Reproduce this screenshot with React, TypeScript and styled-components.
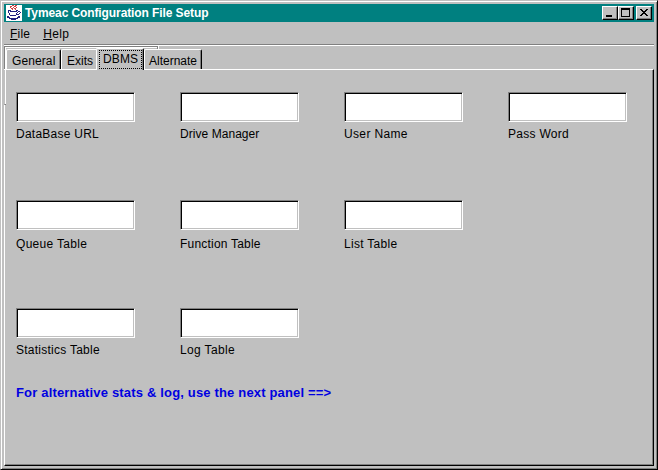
import React from "react";
import styled, { createGlobalStyle, css } from "styled-components";

const Global = createGlobalStyle`
  *, *::before { box-sizing: border-box; }
  body { margin: 0; background: #c0c0c0; overflow: hidden; }
`;

const Window = styled.div`
  width: 658px;
  height: 470px;
  background: #c0c0c0;
  border: 1px solid;
  border-color: #c0c0c0 #000 #000 #c0c0c0;
  box-shadow: inset 1px 1px #fff, inset -1px -1px #808080;
  padding: 3px;
  display: flex;
  flex-direction: column;
  font: 12px/14px "Liberation Sans", Arial, sans-serif;
  color: #000;
  cursor: default;
`;

const TitleBar = styled.header`
  height: 18px;
  width: 650px;
  flex: none;
  background: #008080;
  display: flex;
  align-items: center;
  padding: 0 2px;
`;

const Icon = styled.svg`
  display: block;
  width: 16px;
  height: 16px;
  margin-right: 3px;
`;

const Title = styled.h1`
  margin: 0;
  flex: 1;
  color: #fff;
  font: bold 12px/16px "Liberation Sans", Arial, sans-serif;
  letter-spacing: -0.1px;
  white-space: nowrap;
`;

const Control = styled.button<{ $gap?: boolean }>`
  width: 16px;
  height: 14px;
  padding: 0;
  margin-left: ${(p) => (p.$gap ? 2 : 0)}px;
  background: #c0c0c0;
  border: 1px solid;
  border-color: #fff #000 #000 #fff;
  box-shadow: inset -1px -1px #808080;
  svg { display: block; }
`;

const MenuBar = styled.nav`
  height: 22px;
  flex: none;
  display: flex;
  gap: 13px;
  padding: 5px 6px 0;
`;

const Text = styled.span<{ $spacing?: number }>`
  letter-spacing: ${(p) => p.$spacing ?? 0}px;
  white-space: nowrap;
`;

const Content = styled.main`
  flex: 1;
  width: 650px;
  display: flex;
  flex-direction: column;
  border-top: 1px solid #808080;
  box-shadow: inset 0 1px #fff, inset 1px 0 #808080, inset 2px 0 #fff;
`;

const TabStrip = styled.div`
  height: 24px;
  flex: none;
  display: flex;
  align-items: flex-end;
  padding-left: 1px;
  margin-left: 1px;
  background:
    linear-gradient(#808080, #808080) 0 1px / 153px 1px no-repeat,
    linear-gradient(#fff, #fff) 0 2px / 152px 1px no-repeat,
    linear-gradient(#808080, #808080) 152px 1px / 1px 23px no-repeat,
    linear-gradient(#fff, #fff) 153px 1px / 1px 23px no-repeat;
`;

const Tab = styled.div<{ $width: number; $pad?: number; $active?: boolean; $covered?: boolean }>`
  width: ${(p) => p.$width}px;
  height: 20px;
  background: #c0c0c0;
  border: 1px solid;
  border-color: #fff #000 transparent #fff;
  border-bottom: 0;
  border-radius: 2px 2px 0 0;
  box-shadow: inset -1px 0 #808080;
  padding: 4px 0 0 ${(p) => p.$pad ?? 5}px;
  ${(p) =>
    p.$covered &&
    css`
      border-right: 0;
      border-top-right-radius: 0;
      box-shadow: none;
    `}
  ${(p) =>
    p.$active &&
    css`
      position: relative;
      z-index: 1;
      height: 22px;
      margin-bottom: -1px;
      padding: 1px 2px;
    `}
`;

const Focus = styled.div`
  width: 43px;
  height: 19px;
  border: 1px dotted #000;
  padding: 1px 0 0 3px;
`;

const Panel = styled.section`
  position: relative;
  flex: 1;
  width: 650px;
  border: 1px solid;
  border-color: #fff #000 #000 #fff;
  box-shadow: inset -1px -1px #808080;
  background: #c0c0c0;
  background-clip: padding-box;
  padding: 22px 0 0 11px;

  /* end of the etched frame that runs down behind the tab strip */
  &::before {
    content: "";
    position: absolute;
    left: -1px;
    top: 0;
    width: 2px;
    height: 35px;
    background: #fff;
    border-left: 1px solid #c0c0c0;
    border-bottom: 1px solid #808080;
  }
`;

const Fields = styled.div`
  display: grid;
  grid-template-columns: repeat(4, 164px);
  grid-auto-rows: 108px;
`;

const Field = styled.label<{ $gap: number }>`
  display: flex;
  flex-direction: column;
  align-items: flex-start;
  gap: ${(p) => p.$gap}px;
`;

const Input = styled.input`
  width: 119px;
  height: 30px;
  padding: 0 3px;
  outline: 0;
  border: 1px solid;
  border-color: #808080 #fff #fff #808080;
  border-radius: 0;
  background: #fff;
  box-shadow: inset 1px 1px #000, inset -1px -1px #c0c0c0;
`;

const Note = styled.p`
  margin: -31px 0 0;
  color: #0000e0;
  font: bold 13px/16px "Liberation Sans", Arial, sans-serif;
  letter-spacing: 0.17px;
  white-space: nowrap;
`;

type FieldSpec = { name: string; spacing: number; gap: number };

const fields: (FieldSpec | null)[] = [
  { name: "DataBase URL", spacing: 0.25, gap: 5 },
  { name: "Drive Manager", spacing: 0.05, gap: 5 },
  { name: "User Name", spacing: 0.35, gap: 5 },
  { name: "Pass Word", spacing: 0.28, gap: 5 },
  { name: "Queue Table", spacing: 0.3, gap: 7 },
  { name: "Function Table", spacing: 0.2, gap: 7 },
  { name: "List Table", spacing: 0.3, gap: 7 },
  null,
  { name: "Statistics Table", spacing: 0.25, gap: 5 },
  { name: "Log Table", spacing: 0.35, gap: 5 },
];

export default function App() {
  return (
    <>
      <Global />
      <Window>
        <TitleBar>
          <Icon viewBox="0 0 16 16" shapeRendering="crispEdges">
            <rect width="16" height="16" fill="#fff" />
            <path d="M6 0.5h2M9 0.5h2M4 1.5h2M8 1.5h2M4 2.5h1M7 2.5h1M10 2.5h1M5 3.5h2M8 3.5h2M6 4.5h1M9 4.5h1" stroke="#d04040" />
            <path d="M2 5.5h3M10 5.5h2M2 6.5h1M4 6.5h7M12 6.5h2M2 7.5h1M11 7.5h1M14 7.5h1M3 8.5h1M10 8.5h1M13 8.5h1M3 9.5h1M10 9.5h3M4 10.5h6M1 11.5h2M12 11.5h2M1 12.5h3M11 12.5h3M3 13.5h9M5 14.5h5" stroke="#202080" />
          </Icon>
          <Title>Tymeac Configuration File Setup</Title>
          <Control aria-label="Minimize">
            <svg width="14" height="12" shapeRendering="crispEdges"><path d="M3 8h6v2H3z" /></svg>
          </Control>
          <Control aria-label="Maximize">
            <svg width="14" height="12" shapeRendering="crispEdges"><path fillRule="evenodd" d="M2 1h9v9H2zM3 3v6h7V3z" /></svg>
          </Control>
          <Control $gap aria-label="Close">
            <svg width="14" height="12" shapeRendering="crispEdges">
              <path d="M3 2h2v1h1v1h2V3h1V2h2v1h-1v1H9v1H8v1h1v1h1v1h1v1H9V8H8V7H6v1H5v1H3V8h1V7h1V6h1V5H5V4H4V3H3z" />
            </svg>
          </Control>
        </TitleBar>
        <MenuBar>
          <Text $spacing={0.2}><u>F</u>ile</Text>
          <Text $spacing={0.4}><u>H</u>elp</Text>
        </MenuBar>
        <Content>
          <TabStrip>
            <Tab $width={55}><Text $spacing={0.1}>General</Text></Tab>
            <Tab $width={35} $covered><Text>Exits</Text></Tab>
            <Tab $width={48} $active><Focus><Text $spacing={0.15}>DBMS</Text></Focus></Tab>
            <Tab $width={58} $pad={4}><Text>Alternate</Text></Tab>
          </TabStrip>
          <Panel>
            <Fields>
              {fields.map((f, i) =>
                f ? (
                  <Field key={f.name} $gap={f.gap}>
                    <Input />
                    <Text $spacing={f.spacing}>{f.name}</Text>
                  </Field>
                ) : (
                  <span key={i} />
                ),
              )}
            </Fields>
            <Note>For alternative stats &amp; log, use the next panel ==&gt;</Note>
          </Panel>
        </Content>
      </Window>
    </>
  );
}
